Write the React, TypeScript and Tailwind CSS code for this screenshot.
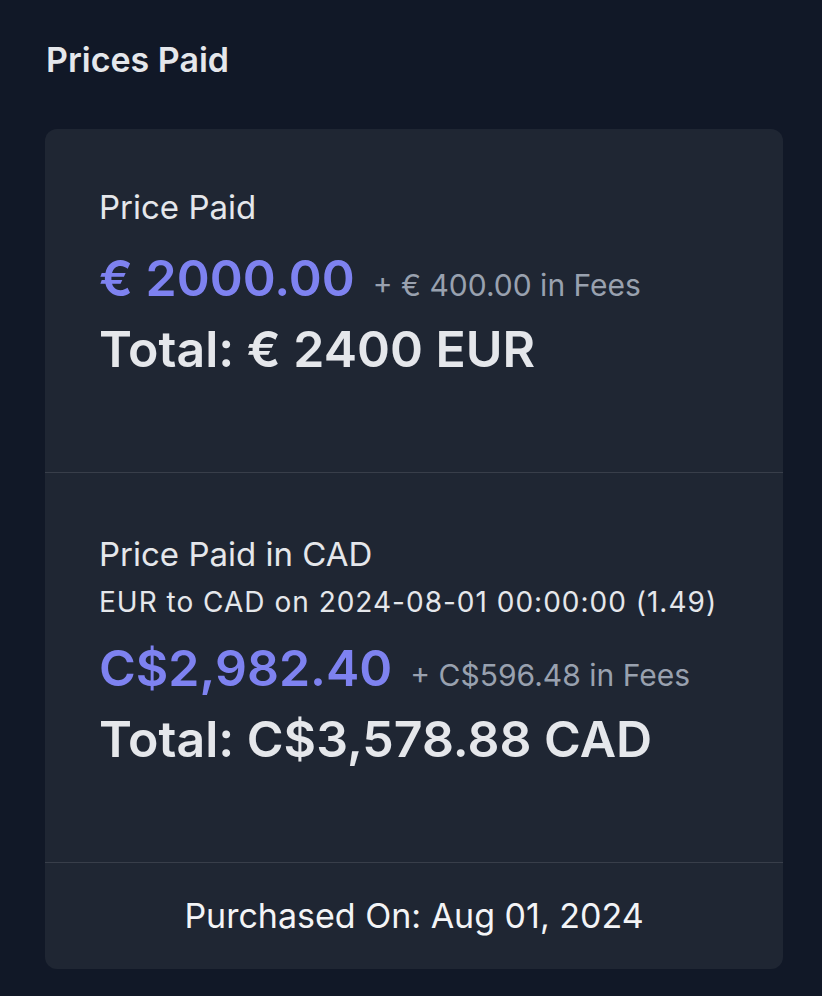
import React from 'react'

// Prices Paid — card with original price, converted price and purchase date

interface PriceBlockProps {
  label: string
  note?: string
  amount: string
  fees: string
  total: string
  pt: string
  amountGap: string
}

const PriceBlock: React.FC<PriceBlockProps> = ({ label, note, amount, fees, total, pt, amountGap }) => (
  <div className={`px-[54px] ${pt} pb-[93px]`}>
    <p className="text-[33px] leading-[48px] text-gray-200">{label}</p>
    {note && <p className="mt-[6px] text-[28px] leading-[36px] tracking-[1px] text-gray-200">{note}</p>}
    <div className={`${amountGap} flex items-baseline`}>
      <span className="text-[50px] leading-[60px] font-semibold text-[#7e82f0]">{amount}</span>
      <span className="ml-[18px] text-[30px] text-gray-400">{fees}</span>
    </div>
    <p className="mt-[11px] text-[50px] leading-[60px] font-semibold text-gray-200">{total}</p>
  </div>
)

export default function App() {
  return (
    <div
      className="min-h-[996px] w-[822px] bg-[#111827] pt-[36px] pb-[28px]"
      style={{ fontFamily: 'Inter, "Noto Sans", sans-serif' }}
    >
      <h2 className="ml-[46px] text-[34px] leading-[48px] font-semibold text-gray-200">Prices Paid</h2>

      <div className="ml-[45px] mt-[45px] w-[738px] rounded-xl bg-[#1f2633]">
        <PriceBlock
          pt="pt-[54px]"
          amountGap="mt-[17px]"
          label="Price Paid"
          amount="€ 2000.00"
          fees="+ € 400.00 in Fees"
          total="Total: € 2400 EUR"
        />
        <div className="border-t border-[#383e4a]">
          <PriceBlock
            pt="pt-[57px]"
            amountGap="mt-[18px]"
            label="Price Paid in CAD"
            note="EUR to CAD on 2024-08-01 00:00:00 (1.49)"
            amount="C$2,982.40"
            fees="+ C$596.48 in Fees"
            total="Total: C$3,578.88 CAD"
          />
        </div>
        <div className="border-t border-[#383e4a] pt-[29px] pb-[29px] text-center">
          <p className="text-[34px] leading-[48px] text-gray-100">Purchased On: Aug 01, 2024</p>
        </div>
      </div>
    </div>
  )
}
